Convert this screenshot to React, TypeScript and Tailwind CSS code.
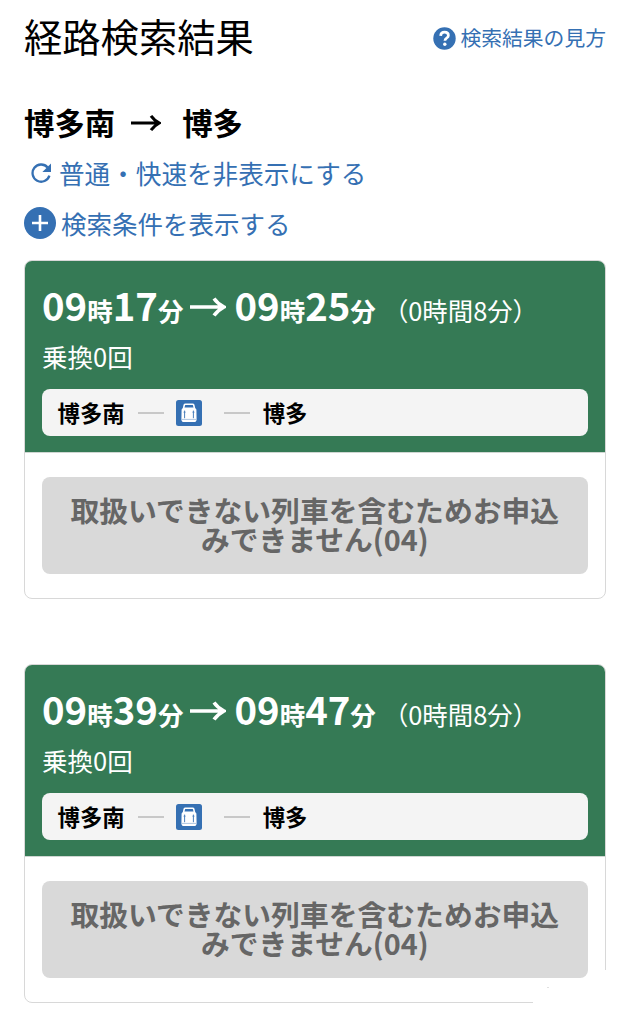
import type { ReactNode } from 'react'

type Route = {
  id: number
  departure: [string, string]
  arrival: [string, string]
  duration: string
}

const routes: Route[] = [
  { id: 1, departure: ['09', '17'], arrival: ['09', '25'], duration: '（0時間8分）' },
  { id: 2, departure: ['09', '39'], arrival: ['09', '47'], duration: '（0時間8分）' }
]

function HelpIcon() {
  return (
    <svg className="size-[23px] shrink-0" viewBox="0 0 23 23" fill="none">
      <circle cx="11.5" cy="11.5" r="11.2" fill="#3570b3" />
      <path d="M7.6 8.8C7.8 6.4 9.4 5.2 11.6 5.2c2.3 0 3.8 1.3 3.8 3.2 0 2.6-3.5 2.7-3.5 5.4" stroke="#fff" strokeWidth="2.7" />
      <circle cx="11.8" cy="17.3" r="1.7" fill="#fff" />
    </svg>
  )
}

function ReloadIcon() {
  return (
    <svg className="size-[20px] shrink-0" viewBox="0 0 20 20" fill="none">
      <path d="M18.4 12.6A8.6 8.6 0 1 1 16.6 4.4" stroke="#3570b3" strokeWidth="2.3" />
      <path d="M20 0.6v8.4h-8.6z" fill="#3570b3" />
    </svg>
  )
}

function PlusIcon() {
  return (
    <svg className="size-[32px] shrink-0" viewBox="0 0 32 32" fill="none">
      <circle cx="16" cy="16" r="16" fill="#3570b3" />
      <path d="M16 8v16M8 16h16" stroke="#fff" strokeWidth="2.6" />
    </svg>
  )
}

function TrainIcon() {
  return (
    <svg className="size-[26px] shrink-0" viewBox="0 0 26 26" fill="none">
      <rect width="26" height="26" rx="2.5" fill="#3570b3" />
      <path d="M7.6 4.4Q8 3.4 9.4 3.4h7.2q1.4 0 1.8 1l.8 3.6 1.2 1.6.2 9.6q0 2.8-2.4 2.8H7.8q-2.4 0-2.4-2.8l.2-9.6L6.8 8z" fill="#fff" />
      <path d="M9.2 4.9h7.6l.7 2.7h-9z" fill="#3570b3" />
      <path d="M8.6 10.6v7.6M17.4 10.6v7.6" stroke="#3570b3" strokeWidth="0.9" />
      <path d="M7.2 12.2h2.8M16 12.2h2.800M6 19.400h14" stroke="#3570b3" strokeWidth="0.4" />
    </svg>
  )
}

function ArrowIcon({ className }: { className: string }) {
  return (
    <svg className={className} viewBox="0 0 36 20" fill="none" stroke="currentColor">
      <path d="M0 10h33M24 1.4q3.4 5 10 8.6-6.6 3.6-10 8.6" strokeWidth="3.6" />
    </svg>
  )
}

function Time({ value }: { value: [string, string] }) {
  return (
    <p className="text-[38.3px] leading-[50px] font-bold whitespace-nowrap">
      {value[0]}
      <span className="text-[25.5px]">時</span>
      {value[1]}
      <span className="text-[25.5px]">分</span>
    </p>
  )
}

function RouteCard({ route, children }: { route: Route; children?: ReactNode }) {
  return (
    <div className="relative h-[339px] rounded-lg border-[1.5px] border-[#d8d8d8] bg-white">
      <div className="h-[192px] rounded-t-[7px] border-b border-[#cfd6d2] bg-[#357a55] px-4 pt-[21px] text-white">
        <div className="flex h-[50px] items-center pl-px">
          <Time value={route.departure} />
          <ArrowIcon className="mr-2 mb-px ml-[7px] h-5 w-9 shrink-0" />
          <Time value={route.arrival} />
          <p className="ml-[7px] pt-[6px] text-[25.4px] whitespace-nowrap">{route.duration}</p>
        </div>
        <p className="mt-1 pl-px text-[25.5px] leading-[40px]">乗換0回</p>
        <div className="mt-[13px] mr-px ml-[0.5px] flex h-[47px] items-center rounded-lg bg-[#f4f4f4] px-4 text-black">
          <p className="text-[22.4px] leading-[47px] font-bold">博多南</p>
          <span className="mr-3 ml-[13px] h-[2px] w-[26px] bg-[#c8c8c8]" />
          <TrainIcon />
          <span className="mr-[13px] ml-[22px] h-[2px] w-[26px] bg-[#c8c8c8]" />
          <p className="text-[22.4px] leading-[47px] font-bold">博多</p>
        </div>
      </div>
      <div className="pt-[24px] pr-[17px] pl-[16.5px]">
        <button className="block h-[97px] w-full rounded-lg bg-[#d9d9d9] pb-[3px] text-[28.8px] leading-[29px] font-bold text-[#666]" disabled>
          取扱いできない列車を含むためお申込
          <br />
          みできません(04)
        </button>
      </div>
      {children}
    </div>
  )
}

export default function App() {
  return (
    <main
      lang="ja"
      className="h-[1024px] w-[630px] overflow-hidden bg-white px-6 font-['Noto_Sans_CJK_JP',sans-serif] text-black"
    >
      <header className="flex h-[71px] items-center justify-between">
        <h1 className="text-[38.3px] leading-[71px]">経路検索結果</h1>
        <a className="flex items-center gap-1 pt-[5px] text-[20.8px] text-[#3570b3]">
          <HelpIcon />
          検索結果の見方
        </a>
      </header>
      <h2 className="mt-[29px] flex h-[45px] items-center text-[30.4px] font-bold">
        <span>博多南</span>
        <ArrowIcon className="mr-[21px] ml-4 h-[18px] w-[30px]" />
        <span>博多</span>
      </h2>
      <a className="mt-[3px] flex h-[50px] items-center gap-2 pl-[7px] text-[25.6px] text-[#3570b3]">
        <ReloadIcon />
        普通・快速を非表示にする
      </a>
      <a className="mt-px flex h-[48px] items-center gap-[5px] text-[25.5px] text-[#3570b3]">
        <PlusIcon />
        検索条件を表示する
      </a>
      <section className="mt-[13px] flex flex-col gap-[65px]">
        <RouteCard route={routes[0]} />
        <RouteCard route={routes[1]}>
          {/* faded corner of the last card */}
          <span className="absolute -right-1 -bottom-1 h-[25px] w-[76px] bg-white" />
          <span className="absolute -right-1 -bottom-1 h-[36px] w-[12px] bg-white" />
          <span className="absolute right-[56px] bottom-[14px] h-px w-[2px] bg-[#e0e0e0]" />
        </RouteCard>
      </section>
    </main>
  )
}
